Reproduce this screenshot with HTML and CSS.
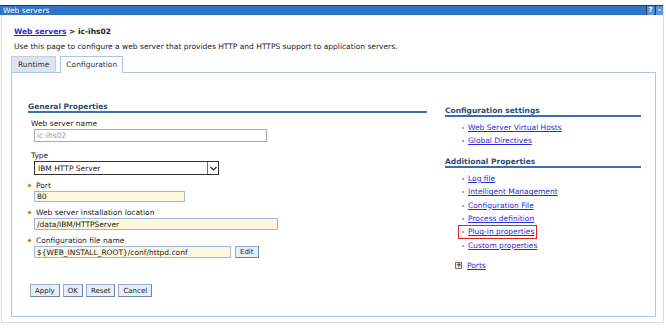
FILE: index.html
```html
<!DOCTYPE html>
<html lang="en">
<head>
    <meta charset="UTF-8">
    <title>Web servers</title>
    <link rel="stylesheet" href="styles.css">
</head>
<body>
    <div class="portlet">
        <div class="titlebar">
            <span class="title">Web servers</span>
            <span class="tb-icons">
                <span class="tb-btn">?</span>
                <span class="tb-btn">&ndash;</span>
            </span>
        </div>

        <div class="page">
            <div class="crumb"><a href="#">Web servers</a> &gt; ic-ihs02</div>
            <p class="desc">Use this page to configure a web server that provides HTTP and HTTPS support to application servers.</p>

            <div class="tabs">
                <span class="tab">Runtime</span>
                <span class="tab active">Configuration</span>
            </div>

            <div class="tabbox">
                <div class="cols">
                    <!-- left: general properties form -->
                    <div class="left">
                        <h3 class="section">General Properties</h3>

                        <div class="field">
                            <label>Web server name</label>
                            <input class="txt disabled w233" value="ic-ihs02" disabled>
                        </div>
                        <div class="field type">
                            <label>Type</label>
                            <div class="select">
                                <span>IBM HTTP Server</span>
                                <span class="arrow">
                                    <svg width="7" height="5" viewBox="0 0 7 5"><path d="M0.5 1 L3.5 4 L6.5 1" fill="none" stroke="#222" stroke-width="1.2"/></svg>
                                </span>
                            </div>
                        </div>
                        <div class="field">
                            <label class="required"><i class="req"></i>Port</label>
                            <input class="txt w151 short" value="80">
                        </div>
                        <div class="field">
                            <label class="required"><i class="req"></i>Web server installation location</label>
                            <input class="txt w244" value="/data/IBM/HTTPServer">
                        </div>
                        <div class="field">
                            <label class="required"><i class="req"></i>Configuration file name</label>
                            <div class="row">
                                <input class="txt w197" value="${WEB_INSTALL_ROOT}/conf/httpd.conf">
                                <button class="btn">Edit</button>
                            </div>
                        </div>

                        <div class="actions">
                            <button class="btn">Apply</button>
                            <button class="btn">OK</button>
                            <button class="btn">Reset</button>
                            <button class="btn">Cancel</button>
                        </div>
                    </div>

                    <!-- right: related links -->
                    <div class="right">
                        <h3 class="section">Configuration settings</h3>
                        <ul class="links">
                            <li><a href="#">Web Server Virtual Hosts</a></li>
                            <li><a href="#">Global Directives</a></li>
                        </ul>

                        <h3 class="section">Additional Properties</h3>
                        <ul class="links">
                            <li><a href="#">Log file</a></li>
                            <li><a href="#">Intelligent Management</a></li>
                            <li><a href="#">Configuration File</a></li>
                            <li><a href="#">Process definition</a></li>
                            <li class="marked"><a href="#">Plug-in properties</a></li>
                            <li><a href="#">Custom properties</a></li>
                        </ul>

                        <div class="ports">
                            <span class="plus">+</span>
                            <a href="#">Ports</a>
                        </div>
                    </div>
                </div>
            </div>
        </div>
    </div>
</body>
</html>
```

FILE: styles.css
```css
body {
    margin: 0;
    padding: 5px 0 0 0;
    background: #fff;
    font-family: "DejaVu Sans", Verdana, sans-serif;
    font-size: 7.5px;
    color: #1a1a1a;
}
a {
    color: #2a2ad8;
    text-decoration: underline;
}
.portlet {
    width: 661px;
    height: 317px;
    border-left: 1px solid #ddd;
    border-right: 1px solid #ddd;
    border-bottom: 1px solid #ddd;
    margin-left: 1px;
}
.titlebar {
    height: 9px;
    background: #2f74c6;
    border-top: 1px solid #1d3f6e;
    display: flex;
    justify-content: space-between;
    align-items: center;
    margin-left: -2px;
}
.title {
    color: #fff;
    padding-left: 3px;
    line-height: 9px;
}
.tb-icons {
    display: flex;
    gap: 1px;
    height: 9px;
}
.tb-btn {
    width: 7px;
    height: 9px;
    background: #5b93d6;
    color: #fff;
    font-size: 7px;
    line-height: 9px;
    text-align: center;
    font-weight: bold;
    border-left: 1px solid #1d3f6e;
}
.page {
    padding: 12px 7px 0 9px;
}
.crumb {
    font-weight: bold;
    margin-left: 3px;
    line-height: 10px;
}
.crumb a {
    color: #2a2ad8;
}
.desc {
    margin: 5px 0 0 3px;
    line-height: 10px;
}
.tabs {
    display: flex;
    gap: 4px;
    margin-top: 4px;
    border-bottom: 1px solid #aec4e4;
    height: 16px;
    align-items: flex-end;
}
.tab {
    padding: 0 6px;
    height: 15px;
    line-height: 15px;
    border: 1px solid #c3cfe0;
    border-bottom: none;
    background: #dde4ef;
    color: #333;
}
.tab.active {
    background: #fff;
    height: 16px;
    margin-bottom: -1px;
    padding: 0 5px;
    border-color: #aec4e4;
}
.tabbox {
    height: 243px;
    border: 1px solid #aec4e4;
    border-top: none;
}
.cols {
    display: flex;
    padding: 29px 0 0 16px;
}
.left {
    width: 399px;
}
.right {
    width: 196px;
    margin-left: 18px;
    padding-top: 4px;
}
.section {
    margin: 0;
    font-size: 7.5px;
    font-weight: bold;
    color: #2d4b74;
    line-height: 9px;
    border-bottom: 2px solid #3e6fb0;
}
.field {
    margin: 6px 0 0 3px;
}
.field.type {
    margin-top: 9px;
}
.field label {
    display: block;
    line-height: 10px;
    color: #1a1a1a;
}
.field label.required {
    margin-left: -3px;
}
.req {
    display: inline-block;
    width: 3px;
    height: 3px;
    background: #b98a1e;
    transform: rotate(45deg);
    margin: 0 5px 1px 0;
    vertical-align: middle;
}
.txt {
    display: block;
    margin-left: 3px;
    height: 12px;
    box-sizing: border-box;
    border: 1px solid #9fb7d8;
    background: #fff6de;
    font-family: inherit;
    font-size: 7.5px;
    padding: 0 2px;
    color: #1a1a1a;
}
.txt.short {
    height: 11px;
}
.txt.disabled {
    height: 13px;
    background: #fff;
    border: 1px solid #aaa;
    color: #999;
}
.w233 { width: 233px; }
.w151 { width: 151px; }
.w244 { width: 244px; }
.w197 { width: 197px; }
.select {
    margin-left: 3px;
    width: 185px;
    height: 14px;
    box-sizing: border-box;
    border: 1px solid #333;
    display: flex;
    justify-content: space-between;
    align-items: center;
    padding-left: 3px;
}
.arrow {
    width: 10px;
    height: 12px;
    border-left: 1px solid #777;
    display: flex;
    align-items: center;
    justify-content: center;
}
.row {
    display: flex;
    align-items: center;
    gap: 4px;
}
.btn {
    font-family: inherit;
    font-size: 7px;
    height: 12px;
    padding: 0 4px;
    background: #e8eef8;
    border: 1px solid #98acc8;
    border-right-color: #6f86a6;
    border-bottom-color: #6f86a6;
    color: #1a1a1a;
    line-height: 10px;
}
.actions .btn {
    height: 13px;
}
.actions {
    display: flex;
    gap: 3px;
    margin: 26px 0 0 2px;
}
.links {
    list-style: none;
    margin: 4px 0 9px 17px;
    padding: 0;
}
.links li {
    line-height: 13.4px;
    position: relative;
    padding-left: 6px;
}
.links li::before {
    content: "";
    position: absolute;
    left: 0;
    top: 6px;
    width: 2px;
    height: 2px;
    background: #aaa;
}
.links li.marked {
    display: inline-block;
}
.links li.marked::after {
    content: "";
    position: absolute;
    left: -4px;
    right: -3px;
    top: 0;
    bottom: 0;
    border: 1.5px solid #e82020;
}
.ports {
    display: flex;
    align-items: center;
    gap: 5px;
    margin: 4px 0 0 10px;
}
.plus {
    width: 5px;
    height: 5px;
    border: 1px solid #777;
    background: #eee;
    font-size: 7px;
    line-height: 5px;
    text-align: center;
    font-weight: bold;
}
```
